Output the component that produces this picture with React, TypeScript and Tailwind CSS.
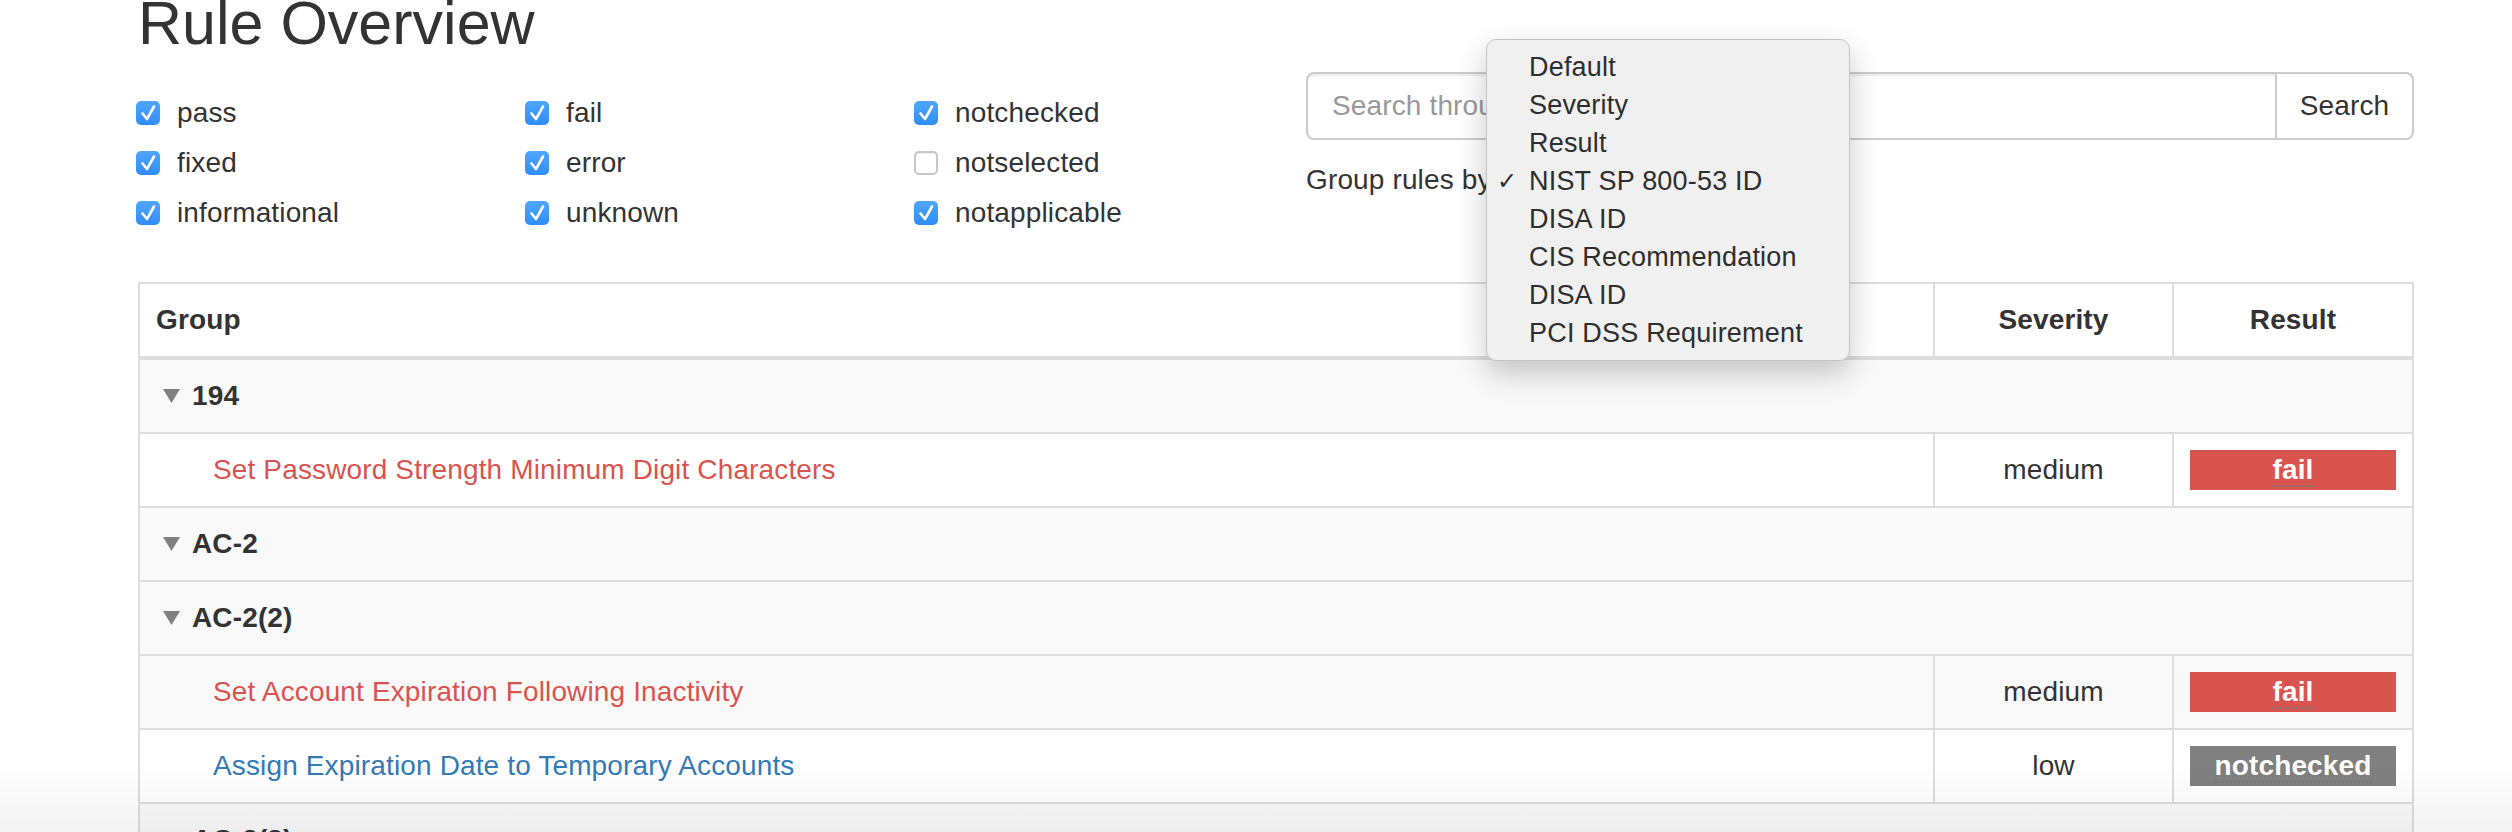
const filters = [
  { label: "pass", checked: true },
  { label: "fail", checked: true },
  { label: "notchecked", checked: true },
  { label: "fixed", checked: true },
  { label: "error", checked: true },
  { label: "notselected", checked: false },
  { label: "informational", checked: true },
  { label: "unknown", checked: true },
  { label: "notapplicable", checked: true },
];

const groupOptions = [
  { label: "Default", checked: false },
  { label: "Severity", checked: false },
  { label: "Result", checked: false },
  { label: "NIST SP 800-53 ID", checked: true },
  { label: "DISA ID", checked: false },
  { label: "CIS Recommendation", checked: false },
  { label: "DISA ID", checked: false },
  { label: "PCI DSS Requirement", checked: false },
];

type Row =
  | { kind: "group"; id: string }
  | { kind: "rule"; title: string; severity: string; result: "fail" | "notchecked"; striped: boolean };

const rows: Row[] = [
  { kind: "group", id: "194" },
  { kind: "rule", title: "Set Password Strength Minimum Digit Characters", severity: "medium", result: "fail", striped: false },
  { kind: "group", id: "AC-2" },
  { kind: "group", id: "AC-2(2)" },
  { kind: "rule", title: "Set Account Expiration Following Inactivity", severity: "medium", result: "fail", striped: true },
  { kind: "rule", title: "Assign Expiration Date to Temporary Accounts", severity: "low", result: "notchecked", striped: false },
  { kind: "group", id: "AC-2(3)" },
];

function CheckBox({ checked }: { checked: boolean }) {
  if (!checked) {
    return (
      <span className="block h-[24px] w-[24px] rounded-[5px] border-2 border-[#c6c6c6] bg-white shadow-[inset_0_1px_1px_rgba(0,0,0,0.06)]" />
    );
  }
  return (
    <span className="flex h-[24px] w-[24px] items-center justify-center rounded-[5px] bg-linear-to-b from-[#4fa6fd] to-[#2f8df8]">
      <svg viewBox="0 0 24 24" className="h-[24px] w-[24px]">
        <path
          d="M6.5 12.5l4.5 5.5 7-12.5"
          fill="none"
          stroke="#fff"
          strokeWidth="2.6"
          strokeLinecap="round"
          strokeLinejoin="round"
        />
      </svg>
    </span>
  );
}

function ResultBadge({ result }: { result: "fail" | "notchecked" }) {
  return (
    <div
      className={
        result === "fail"
          ? "h-[40px] bg-[#d9534f] text-center font-bold leading-[40px] text-white"
          : "h-[40px] bg-[#808080] text-center font-bold leading-[40px] text-white"
      }
    >
      <span className="border-b-2 border-dotted border-[#777]">{result}</span>
    </div>
  );
}

export default function App() {
  return (
    <div className="relative h-[832px] w-full overflow-hidden bg-white font-['Liberation_Sans',Arial,sans-serif] text-[28px] leading-[40px] tracking-[0.14px] text-[#333]">
      <div className="ml-[138px] w-[2276px]">
        <h1 className="mt-[-10px] text-[61px] font-normal leading-[66px] tracking-normal text-[#333]">Rule Overview</h1>

        <div className="mt-[16px] flex h-[210px] gap-[30px]">
          {/* filters */}
          <div className="w-[1138px] pt-[21px]">
            <div className="grid grid-cols-[389px_389px_auto] gap-y-[10px]">
              {filters.map((f) => (
                <label key={f.label} className="-ml-[2px] flex h-[40px] items-center gap-[17px]">
                  <CheckBox checked={f.checked} />
                  <span>{f.label}</span>
                </label>
              ))}
            </div>
          </div>

          {/* search + grouping */}
          <div className="relative flex-1">
            <div className="flex h-[68px]">
              <input
                className="h-[68px] flex-1 rounded-l-[8px] border-2 border-[#ccc] px-[24px] text-[28px] shadow-[inset_0_2px_2px_rgba(0,0,0,0.075)] outline-none placeholder:text-[#999]"
                placeholder="Search through XCCDF rules"
              />
              <button className="h-[68px] w-[137px] rounded-r-[8px] border-2 border-l-0 border-[#ccc] bg-white text-[28px] text-[#333]">
                Search
              </button>
            </div>
            <div className="mt-[20px] h-[40px]">Group rules by:</div>

            <div className="absolute left-[180px] top-[-33px] w-[364px] rounded-[10px] border border-[#c4c4c4] bg-[#f0f0f0] py-[8px] text-[27px] leading-[38px] tracking-[0.2px] text-[#2e2e2e] shadow-[0_12px_30px_rgba(0,0,0,0.22)]">
              {groupOptions.map((o, i) => (
                <div key={i} className="flex">
                  <span className="w-[42px] pl-[10px] font-['DejaVu_Sans',sans-serif] text-[24px] font-bold">
                    {o.checked ? "✓" : ""}
                  </span>
                  <span>{o.label}</span>
                </div>
              ))}
            </div>
          </div>
        </div>

        <table className="w-full table-fixed border-collapse border-2 border-[#ddd]">
          <thead>
            <tr>
              <th className="border-2 border-b-4 border-[#ddd] p-[16px] text-left font-bold">Group</th>
              <th className="w-[239px] border-2 border-b-4 border-[#ddd] p-[16px] text-center font-bold">Severity</th>
              <th className="w-[240px] border-2 border-b-4 border-[#ddd] p-[16px] text-center font-bold">Result</th>
            </tr>
          </thead>
          <tbody>
            {rows.map((r, i) =>
              r.kind === "group" ? (
                <tr key={i} className="bg-[#f9f9f9]">
                  <td colSpan={3} className="border-2 border-[#ddd] p-[16px] font-bold">
                    <div className="flex items-center">
                      <svg width="17" height="14" viewBox="0 0 17 14" className="ml-[7px] mr-[12px]">
                        <path d="M0 0h17L8.5 14z" fill="#808080" />
                      </svg>
                      {r.id}
                    </div>
                  </td>
                </tr>
              ) : (
                <tr key={i} className={r.striped ? "bg-[#f9f9f9]" : "bg-white"}>
                  <td
                    className={
                      r.result === "fail"
                        ? "border-2 border-[#ddd] py-[16px] pl-[73px] pr-[16px] text-[#d9534f]"
                        : "border-2 border-[#ddd] py-[16px] pl-[73px] pr-[16px] text-[#337ab7]"
                    }
                  >
                    {r.title}
                  </td>
                  <td className="border-2 border-[#ddd] p-[16px] text-center">{r.severity}</td>
                  <td className="border-2 border-[#ddd] p-[16px]">
                    <ResultBadge result={r.result} />
                  </td>
                </tr>
              )
            )}
          </tbody>
        </table>
      </div>

      <div className="pointer-events-none absolute inset-x-0 bottom-0 h-[70px] bg-linear-to-b from-white/0 to-black/[0.045]" />
    </div>
  );
}
